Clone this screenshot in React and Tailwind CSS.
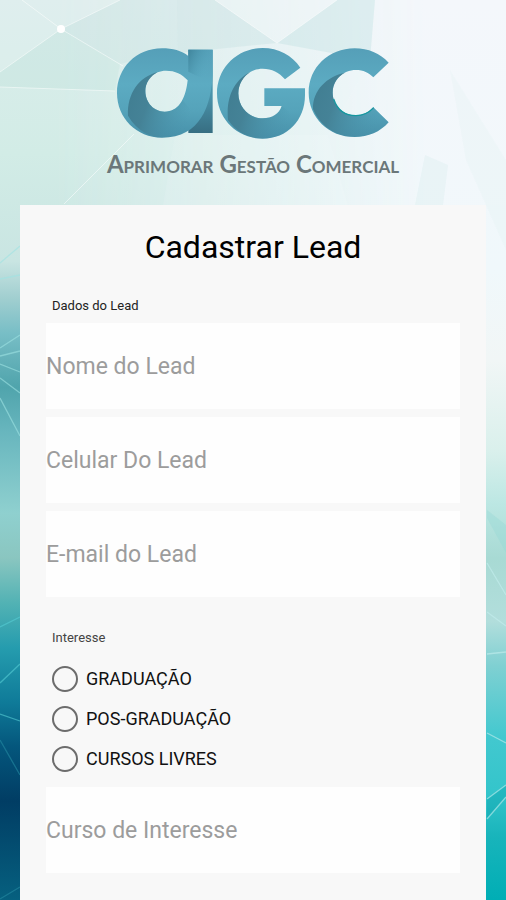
const interests = ["GRADUAÇÃO", "POS-GRADUAÇÃO", "CURSOS LIVRES"];

function Backdrop() {
  return (
    <svg
      aria-hidden="true"
      className="absolute inset-0 h-full w-full"
      viewBox="0 0 506 900"
      preserveAspectRatio="none"
    >
      <defs>
        <linearGradient id="left" x1="0" y1="0" x2="0" y2="1">
          <stop offset="0" stopColor="#dcedec" />
          <stop offset="0.17" stopColor="#d2ece6" />
          <stop offset="0.29" stopColor="#c9e5e2" />
          <stop offset="0.33" stopColor="#a2cfd0" />
          <stop offset="0.37" stopColor="#78bec6" />
          <stop offset="0.43" stopColor="#50a4ac" />
          <stop offset="0.48" stopColor="#68b6be" />
          <stop offset="0.57" stopColor="#8fd0cf" />
          <stop offset="0.62" stopColor="#8ac6c0" />
          <stop offset="0.67" stopColor="#52b2b4" />
          <stop offset="0.72" stopColor="#259cae" />
          <stop offset="0.78" stopColor="#0f7b99" />
          <stop offset="0.83" stopColor="#04567c" />
          <stop offset="0.89" stopColor="#013d64" />
          <stop offset="1" stopColor="#06607f" />
        </linearGradient>
        <linearGradient id="right" x1="0" y1="0" x2="0" y2="1">
          <stop offset="0" stopColor="#f3f7fb" />
          <stop offset="0.3" stopColor="#f0f8fb" />
          <stop offset="0.4" stopColor="#f1f6f6" />
          <stop offset="0.5" stopColor="#daf0ec" />
          <stop offset="0.56" stopColor="#bce7e3" />
          <stop offset="0.62" stopColor="#a8dad4" />
          <stop offset="0.69" stopColor="#b2dedc" />
          <stop offset="0.74" stopColor="#7fd0d2" />
          <stop offset="0.82" stopColor="#42c8cf" />
          <stop offset="0.88" stopColor="#34c5cb" />
          <stop offset="0.93" stopColor="#18b4bb" />
          <stop offset="1" stopColor="#00aeb5" />
        </linearGradient>
        <linearGradient id="fade" x1="0" y1="0" x2="1" y2="0">
          <stop offset="0.1" stopColor="#fff" stopOpacity="0" />
          <stop offset="0.85" stopColor="#fff" stopOpacity="1" />
        </linearGradient>
        <mask id="sweep">
          <rect width="506" height="900" fill="url(#fade)" />
        </mask>
      </defs>
      <rect width="506" height="900" fill="url(#left)" />
      <rect width="506" height="900" fill="url(#right)" mask="url(#sweep)" />
      <g>
        <path d="M61 29 0 72V0h22Z" fill="#fff" opacity=".1" />
        <path d="M61 29 22 0h98Z" fill="#fff" opacity=".1" />
        <path d="M61 29 120 0h57l1 50-58 14Z" fill="#a5cfd0" opacity=".15" />
        <path d="M61 29 0 72v15l115 4 5-27Z" fill="#9fd4cb" opacity=".15" />
        <path d="M177 0h38l62 43-99 10Z" fill="#a0cfcd" opacity=".18" />
        <path d="M215 0h122l-60 43Z" fill="#fff" opacity=".15" />
        <path d="M277 43 337 0h38l-5 60Z" fill="#b3dcd9" opacity=".3" />
        <path d="M375 0h131v205H345l-17-70 42-75Z" fill="#fff" opacity=".08" />
        <path d="M175 135 163 205h185l-20-70Z" fill="#fff" opacity=".1" />
        <path d="m425 155-10 50h28l5-40Z" fill="#b5dedd" opacity=".15" />
        <path d="m450 70 56 90v90l-40-90Z" fill="#dbeef2" opacity=".2" />
      </g>
      <g stroke="#fff" strokeWidth="1" fill="none" opacity=".5">
        <path d="M0 72 61 29 22 0M61 29l59-29M61 29l62 37M0 87l115 4M215 0l62 43 60-43M64 204l70-70" />
      </g>
      <g stroke="#9ee3e3" strokeWidth="1.3" fill="none" opacity=".6">
        <path d="m0 263 20-17M0 279l20-4M0 348l20-13M0 356l20-5M0 364l20 8M0 378l20 15M0 398l20 38" />
        <path d="m0 627 20-10M0 683l20-19M0 714l20 7" stroke="#57ced5" />
        <path d="m0 740 20 35M0 899l20-12" stroke="#258ba2" />
      </g>
      <path d="m487 510 19 15v28l-19-35Z" fill="#91d8d5" opacity=".35" />
      <path d="m487 799 19-14v12l-19 22Z" fill="#079ea8" opacity=".35" />
      <path
        d="m487 563 19 32M487 612l19 14M487 654l19-2M487 733l19 10M487 799l19-14M487 819l19-22"
        stroke="#c4eeee"
        strokeWidth="1.3"
        fill="none"
        opacity=".6"
      />
      <circle cx="61" cy="29" r="4" fill="#fff" />
    </svg>
  );
}

function Logo() {
  return (
    <svg
      role="img"
      aria-label="AGC"
      viewBox="348 144 816 273"
      className="h-[91px] w-[272px]"
    >
      <defs>
        <linearGradient id="body" x1="0" y1="0" x2="0" y2="1">
          <stop offset="0" stopColor="#559fb8" />
          <stop offset="0.4" stopColor="#5cabc2" />
          <stop offset="0.7" stopColor="#55a3ba" />
          <stop offset="1" stopColor="#4790a9" />
        </linearGradient>
        <linearGradient id="shade" x1="0" y1="0" x2="1" y2="0.35">
          <stop offset="0" stopColor="#3f7c90" />
          <stop offset="0.4" stopColor="#437f93" stopOpacity="0.9" />
          <stop offset="1" stopColor="#4a94ac" stopOpacity="0" />
        </linearGradient>
        <linearGradient id="stem" x1="0" y1="0" x2="0" y2="1">
          <stop offset="0" stopColor="#4f9bb3" />
          <stop offset="0.55" stopColor="#4a93aa" />
          <stop offset="1" stopColor="#376e82" />
        </linearGradient>
        <linearGradient id="fold" x1="0" y1="0" x2="0.9" y2="0.5">
          <stop offset="0" stopColor="#387b92" stopOpacity="0.75" />
          <stop offset="1" stopColor="#5aaec6" stopOpacity="0" />
        </linearGradient>
      </defs>
      <path d="M562 149H635V399H562Z" fill="url(#stem)" />
      <path
        fillRule="evenodd"
        fill="url(#body)"
        d="M483 145C515 145 542 152 562 168L562 149H635V225C630 315 600 413 483 413C406 413 348 354 348 279C348 204 406 145 483 145ZM495 212C458 212 433 239 433 273C433 309 460 335 491 335C530 335 553 302 560 241C543 222 523 212 495 212Z"
      />
      <path d="M562 149H635V250L562 215Z" fill="url(#fold)" />
      <path
        d="M470 216C414 231 378 280 381 347C408 394 450 412 483 412C530 412 565 393 590 355L545 300C533 324 514 335 491 335C460 335 433 309 433 273C433 249 448 228 470 216Z"
        fill="url(#shade)"
      />
      <path
        fill="url(#body)"
        d="M898 203 852 238C834 217 813 206 785 206C743 206 712 239 712 280C712 322 744 355 785 355C814 355 835 341 842 318H790V265H912V285C912 361 859 416 785 416C708 416 648 356 648 280C648 204 708 144 785 144C832 144 874 166 898 203Z"
      />
      <path
        d="M749 215C704 237 674 285 681 360C711 402 748 415 785 415C832 415 870 394 893 358L842 318C835 341 814 355 785 355C744 355 712 322 712 280C712 253 727 229 749 215Z"
        fill="url(#shade)"
      />
      <path
        fill="url(#body)"
        d="M1163 188 1117 232C1103 218 1087 210 1065 210C1025 210 995 240 995 278C995 316 1025 346 1065 346C1087 346 1103 337 1117 322L1163 367C1137 396 1103 411 1061 411C983 411 923 352 923 278C923 203 983 145 1061 145C1102 145 1137 160 1163 188Z"
      />
      <path
        d="M1032 218C979 229 934 270 936 327C957 377 1003 410 1061 410C1103 410 1137 396 1163 367L1117 322C1103 337 1087 346 1065 346C1025 346 995 316 995 278C995 251 1010 229 1032 218Z"
        fill="url(#shade)"
      />
      <path
        d="M998 297C1009 330 1034 347 1065 347C1087 347 1104 338 1118 323"
        fill="none"
        stroke="#16979f"
        strokeWidth="4"
      />
    </svg>
  );
}

function Field({ label, type = "text" }) {
  return (
    <input
      type={type}
      aria-label={label}
      placeholder={label}
      className="block h-[86px] w-full bg-[#fefefe] text-[23px] text-black outline-none placeholder:text-[#9c9c9c] placeholder:opacity-100"
    />
  );
}

export default function App() {
  return (
    <div className="relative flex min-h-screen flex-col font-[Roboto,sans-serif]">
      <Backdrop />
      <header className="relative flex flex-col items-center pt-12">
        <Logo />
        <p className="mt-2 mb-6 font-[Lato,sans-serif] text-2xl leading-[34px] font-bold text-[#6b7779] [font-variant-caps:small-caps]">
          Aprimorar Gestão Comercial
        </p>
      </header>
      <main className="relative mx-5 flex-1 bg-[#f8f8f8] px-[26px] pt-5 pb-6">
        <h1 className="text-center text-[32px] leading-[44px] text-black">Cadastrar Lead</h1>
        <form>
          <fieldset className="mt-7 flex flex-col gap-2">
            <legend className="mb-2 px-1.5 text-[13px] leading-[18px] text-[#222]">
              Dados do Lead
            </legend>
            <Field label="Nome do Lead" />
            <Field label="Celular Do Lead" type="tel" />
            <Field label="E-mail do Lead" type="email" />
          </fieldset>
          <fieldset className="mt-8">
            <legend className="mb-3 px-1.5 text-[13px] leading-[18px] text-[#444]">
              Interesse
            </legend>
            {interests.map((name) => (
              <label key={name} className="flex h-10 items-center gap-2 px-1.5 text-lg text-[#111]">
                <input
                  type="radio"
                  name="interesse"
                  value={name}
                  className="size-[26px] appearance-none rounded-full border-2 border-[#6c6c6c] checked:border-8"
                />
                {name}
              </label>
            ))}
          </fieldset>
          <div className="mt-2">
            <Field label="Curso de Interesse" />
          </div>
        </form>
      </main>
    </div>
  );
}
